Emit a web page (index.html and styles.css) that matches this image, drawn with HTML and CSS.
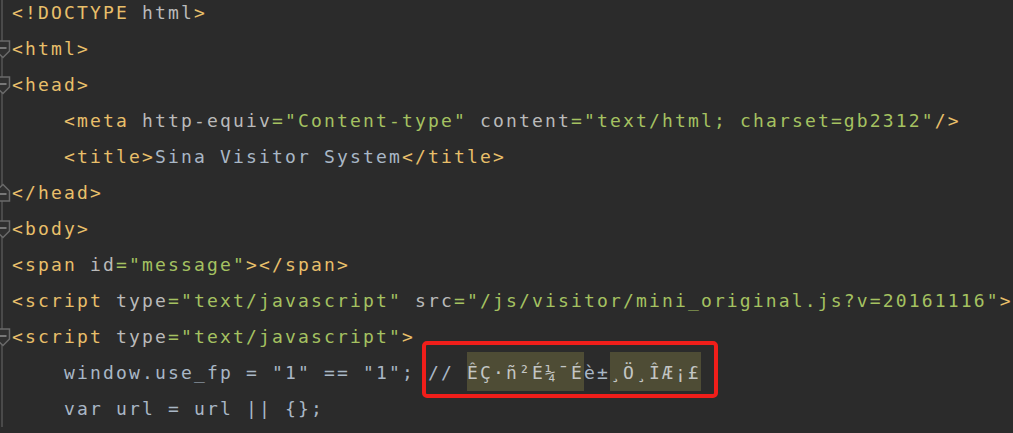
FILE: index.html
```html
<!DOCTYPE html>
<html>
<head>
<meta charset="utf-8">
<title>Editor</title>
<link rel="stylesheet" href="styles.css">
</head>
<body>
<div class="editor">
  <div class="line"><span class="gutter"></span><span class="code"><span class="tag">&lt;!DOCTYPE</span><span class="attr"> html</span><span class="tag">&gt;</span></span></div>
  <div class="line"><span class="gutter"><svg class="fold" width="12" height="20" viewBox="0 0 12 20"><polygon points="-4,2 9.5,2 9.5,12 3,18.5 -4,12"/><line x1="-1" y1="9" x2="6.5" y2="9"/></svg></span><span class="code"><span class="tag">&lt;html&gt;</span></span></div>
  <div class="line"><span class="gutter"><svg class="fold" width="12" height="20" viewBox="0 0 12 20"><polygon points="-4,2 9.5,2 9.5,12 3,18.5 -4,12"/><line x1="-1" y1="9" x2="6.5" y2="9"/></svg></span><span class="code"><span class="tag">&lt;head&gt;</span></span></div>
  <div class="line"><span class="gutter"></span><span class="code">    <span class="tag">&lt;meta</span> <span class="attr">http-equiv</span><span class="val">="Content-type"</span> <span class="attr">content</span><span class="val">="text/html; charset=gb2312"</span><span class="tag">/&gt;</span></span></div>
  <div class="line"><span class="gutter"></span><span class="code">    <span class="tag">&lt;title&gt;</span><span class="txt">Sina Visitor System</span><span class="tag">&lt;/title&gt;</span></span></div>
  <div class="line"><span class="gutter"><svg class="fold" width="12" height="20" viewBox="0 0 12 20"><polygon points="-4,18 9.5,18 9.5,8 3,1.5 -4,8"/><line x1="-1" y1="11" x2="6.5" y2="11"/></svg></span><span class="code"><span class="tag">&lt;/head&gt;</span></span></div>
  <div class="line"><span class="gutter"><svg class="fold" width="12" height="20" viewBox="0 0 12 20"><polygon points="-4,2 9.5,2 9.5,12 3,18.5 -4,12"/><line x1="-1" y1="9" x2="6.5" y2="9"/></svg></span><span class="code"><span class="tag">&lt;body&gt;</span></span></div>
  <div class="line"><span class="gutter"></span><span class="code"><span class="tag">&lt;span</span> <span class="attr">id</span><span class="val">="message"</span><span class="tag">&gt;&lt;/span&gt;</span></span></div>
  <div class="line"><span class="gutter"></span><span class="code"><span class="tag">&lt;script</span> <span class="attr">type</span><span class="val">="text/javascript"</span> <span class="attr">src</span><span class="val">="/js/visitor/mini_original.js?v=20161116"</span><span class="tag">&gt;</span></span></div>
  <div class="line"><span class="gutter"><svg class="fold" width="12" height="20" viewBox="0 0 12 20"><polygon points="-4,2 9.5,2 9.5,12 3,18.5 -4,12"/><line x1="-1" y1="9" x2="6.5" y2="9"/></svg></span><span class="code"><span class="tag">&lt;script</span> <span class="attr">type</span><span class="val">="text/javascript"</span><span class="tag">&gt;</span></span></div>
  <div class="line"><span class="gutter"></span><span class="code"><span class="js">    window.use_fp = "1" == "1"; </span><span class="mark"><span class="js">// </span><span class="bad">ÊÇ·ñ²É¼¯É</span><span class="js">è±</span><span class="bad">¸Ö¸ÎÆ¡£</span></span></span></div>
  <div class="line"><span class="gutter"></span><span class="code"><span class="js">    var url = url || {};</span></span></div>
</div>
</body>
</html>
```
FILE: styles.css
```css
html, body {
  margin: 0;
  padding: 0;
  background: #2b2b2b;
  overflow: hidden;
}

.editor {
  margin-top: -5px;
  font-family: "DejaVu Sans Mono", "Liberation Mono", monospace;
  font-size: 18px;
  letter-spacing: 2.16px;
  line-height: 36px;
  color: #a9b7c6;
}

.line {
  display: flex;
  height: 36px;
}

.gutter {
  flex: none;
  width: 12px;
  display: flex;
  align-items: center;
  background: linear-gradient(to right, transparent 1px, #4a4a4a 1px, #4a4a4a 3px, transparent 3px);
}

.fold {
  display: block;
  overflow: visible;
}

.fold polygon {
  fill: #303030;
  stroke: #6a6a6a;
  stroke-width: 1.5;
}

.fold line {
  stroke: #909090;
  stroke-width: 1.5;
}

.code {
  white-space: pre;
}

.tag { color: #e8bf6a; }
.attr { color: #bababa; }
.val { color: #a5c261; }
.txt { color: #a9b7c6; }
.js { color: #a9b7c6; }

.mark {
  position: relative;
}

.mark::after {
  content: "";
  position: absolute;
  left: -6px;
  right: -17px;
  top: -21px;
  bottom: -15px;
  border: 4px solid #f01e1a;
  border-radius: 5px;
}

.bad {
  color: #c3c6c4;
  background: #4e4c35;
  padding: 10px 0 8px;
}
```
